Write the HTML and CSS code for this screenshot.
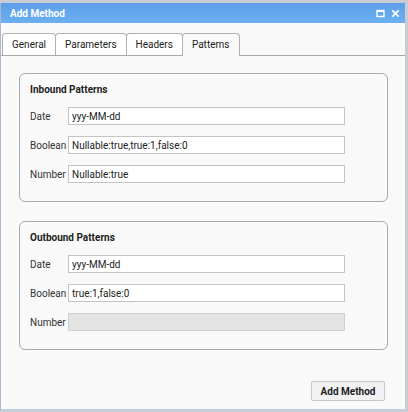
FILE: index.html
```html
<!DOCTYPE html>
<html>
<head>
<meta charset="utf-8">
<link rel="stylesheet" href="styles.css">
</head>
<body>
<div class="window">
  <div class="titlebar">
    <span class="title">Add Method</span>
    <span class="tools">
      <svg class="ico" width="9" height="9" viewBox="0 0 9 9"><rect x="1" y="1.5" width="7" height="6" fill="none" stroke="#fff" stroke-width="1.4"/><rect x="1" y="1" width="7" height="2" fill="#fff"/></svg>
      <svg class="ico" width="9" height="9" viewBox="0 0 9 9"><path d="M1.3 1.3L7.7 7.7M7.7 1.3L1.3 7.7" stroke="#fff" stroke-width="1.8"/></svg>
    </span>
  </div>
  <div class="tabs">
    <div class="tab">General</div>
    <div class="tab">Parameters</div>
    <div class="tab">Headers</div>
    <div class="tab active">Patterns</div>
  </div>
  <div class="content">
    <div class="group">
      <div class="gtitle">Inbound Patterns</div>
      <div class="rows">
        <label class="lbl">Date</label><input class="inp" value="yyy-MM-dd">
        <label class="lbl">Boolean</label><input class="inp" value="Nullable:true,true:1,false:0">
        <label class="lbl">Number</label><input class="inp" value="Nullable:true">
      </div>
    </div>
    <div class="group">
      <div class="gtitle">Outbound Patterns</div>
      <div class="rows">
        <label class="lbl">Date</label><input class="inp" value="yyy-MM-dd">
        <label class="lbl">Boolean</label><input class="inp" value="true:1,false:0">
        <label class="lbl dis">Number</label><input class="inp" disabled value="">
      </div>
    </div>
    <div class="footer">
      <button class="btn">Add Method</button>
    </div>
  </div>
</div>
</body>
</html>
```
FILE: styles.css
```css
html, body {
  margin: 0;
  padding: 0;
}
body {
  background: #c9ccd2;
  width: 408px;
  height: 412px;
  overflow: hidden;
  font-family: Roboto, "Liberation Sans", sans-serif;
  color: #222;
}
.window {
  margin-top: 3px;
  width: 404px;
  height: 406px;
  background: #f9f9f9;
  border-left: 1px solid #a9b9d2;
  border-bottom: 2px solid #c3cee0;
  display: flex;
  flex-direction: column;
}
.titlebar {
  height: 20px;
  background: linear-gradient(#5c9fe8, #6cb0f2);
  display: flex;
  align-items: center;
  justify-content: space-between;
  padding: 0 5px 0 9px;
}
.title {
  color: #fff;
  font-weight: bold;
  font-size: 10px;
}
.tools {
  display: flex;
  gap: 6px;
  align-items: center;
}
.ico {
  display: block;
}
.tabs {
  display: flex;
  margin-top: 10px;
  padding-left: 1px;
  border-bottom: 1px solid #a8a8a8;
  height: 22px;
  align-items: flex-end;
}
.tab {
  height: 22px;
  box-sizing: border-box;
  border: 1px solid #b0b0b0;
  border-bottom: none;
  border-radius: 4px 4px 0 0;
  background: #fff;
  font-size: 10px;
  line-height: 21px;
  padding: 0 9px;
  margin-right: -1px;
  color: #222;
}
.tab.active {
  background: #f9f9f9;
  height: 23px;
  margin-bottom: -1px;
}
.content {
  padding: 17px 17px 0 18px;
  display: flex;
  flex-direction: column;
}
.group {
  border: 1px solid #a9a9a9;
  border-radius: 6px;
  padding: 9px 11px 18px 10px;
  margin-bottom: 19px;
}
.gtitle {
  font-weight: bold;
  font-size: 10px;
  line-height: 14px;
  margin-bottom: 10px;
  color: #222;
}
.rows {
  display: grid;
  grid-template-columns: 38px 277px;
  row-gap: 11px;
  align-items: center;
}
.lbl {
  font-size: 10px;
  color: #333;
}
.inp {
  height: 18px;
  box-sizing: border-box;
  border: 1px solid #c4c4c4;
  background: #fff;
  font-family: Roboto, "Liberation Sans", sans-serif;
  font-size: 10px;
  color: #222;
  padding: 0 3px;
  margin: 0;
  outline: none;
}
.inp:disabled {
  background: #e3e3e3;
  border-color: #cfcfcf;
}
.footer {
  display: flex;
  justify-content: flex-end;
  margin-top: 12px;
  padding-right: 3px;
}
.btn {
  height: 20px;
  width: 74px;
  box-sizing: border-box;
  border: 1px solid #c6c6c6;
  border-radius: 2px;
  background: #f1f1f1;
  font-family: Roboto, "Liberation Sans", sans-serif;
  font-weight: bold;
  font-size: 10px;
  color: #222;
  padding: 0;
}
```
